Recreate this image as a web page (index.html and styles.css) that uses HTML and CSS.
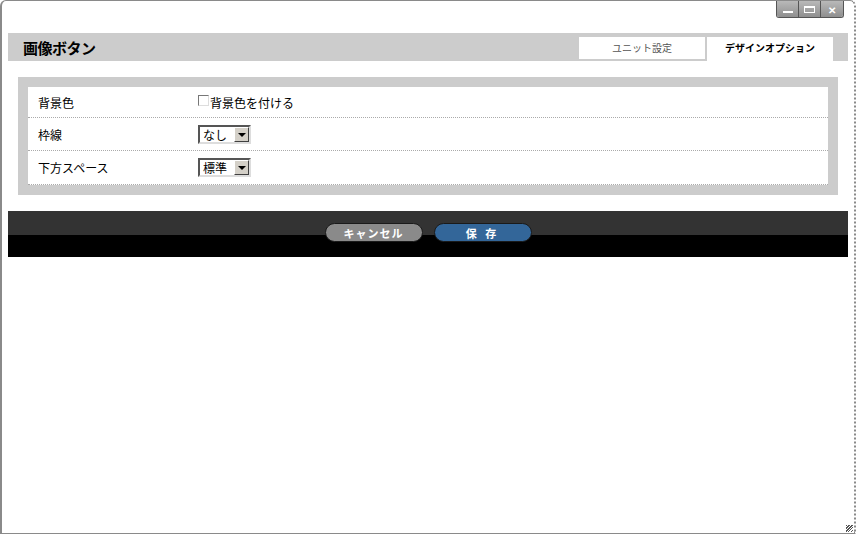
FILE: index.html
```html
<!DOCTYPE html>
<html lang="ja">
<head>
	<meta charset="UTF-8">
	<title>画像ボタン</title>
	<link rel="stylesheet" href="styles.css">
</head>
<body>
	<div class="window">
		<div class="titlebar">
			<div class="controls">
				<span class="ctl"><i class="min"></i></span>
				<span class="ctl"><i class="max"></i></span>
				<span class="ctl close">&#x2715;</span>
			</div>
		</div>
		<div class="header">
			<h1>画像ボタン</h1>
			<div class="tabs">
				<div class="tab">ユニット設定</div>
				<div class="tab active">デザインオプション</div>
			</div>
		</div>
		<div class="panel">
			<div class="rows">
				<div class="row">
					<div class="label">背景色</div>
					<div class="field"><span class="check"></span>背景色を付ける</div>
				</div>
				<div class="row">
					<div class="label">枠線</div>
					<div class="field">
						<span class="select"><span class="val">なし</span><span class="arrow"></span></span>
					</div>
				</div>
				<div class="row">
					<div class="label">下方スペース</div>
					<div class="field">
						<span class="select"><span class="val">標準</span><span class="arrow"></span></span>
					</div>
				</div>
			</div>
		</div>
		<div class="footer">
			<div class="bar"></div>
			<div class="buttons">
				<button class="btn cancel">キャンセル</button>
				<button class="btn save">保 存</button>
			</div>
		</div>
		<div class="grip"></div>
	</div>
</body>
</html>
```

FILE: styles.css
```css
*{
	margin: 0;
	padding: 0;
	box-sizing: border-box;
	font-family: "Noto Sans CJK JP", "Liberation Sans", sans-serif;
	color: #000;
}
body{
	background: #fff;
	overflow: hidden;
}
.window{
	position: relative;
	width: 856px;
	height: 534px;
	border: 1px solid #8a8a8a;
	border-left-width: 2px;
	border-right: 2px dotted #8a8a8a;
	border-radius: 6px 6px 0 0;
	background: #fff;
}
.titlebar{
	height: 32px;
	display: flex;
	justify-content: flex-end;
	padding-right: 10px;
}
.controls{
	display: flex;
	height: 17px;
	border: 1px solid #555;
	border-top: none;
	border-radius: 0 0 3px 3px;
	overflow: hidden;
}
.ctl{
	width: 22px;
	height: 16px;
	background: linear-gradient(#b9b9b9, #8f8f8f);
	border-right: 1px solid #555;
	display: flex;
	align-items: center;
	justify-content: center;
	font-size: 10px;
	font-weight: bold;
	color: #fff;
}
.ctl:last-child{
	border-right: none;
}
.ctl .min{
	width: 10px;
	height: 2px;
	background: #fff;
	margin-top: 5px;
}
.ctl .max{
	width: 11px;
	height: 7px;
	border: 1px solid #fff;
	border-top-width: 2px;
}
.header{
	margin: 0 6px 0 6px;
	height: 28px;
	background: #ccc;
	display: flex;
	justify-content: space-between;
	align-items: flex-end;
}
.header h1{
	font-size: 15px;
	font-weight: bold;
	align-self: center;
	padding-left: 15px;
	letter-spacing: -0.5px;
}
.tabs{
	display: flex;
	gap: 2px;
	margin-right: 15px;
}
.tab{
	width: 126px;
	height: 22px;
	margin-bottom: 2px;
	background: #fff;
	font-size: 10px;
	color: #555;
	text-align: center;
	line-height: 22px;
}
.tab.active{
	height: 24px;
	margin-bottom: 0;
	color: #000;
	font-weight: bold;
}
.panel{
	margin: 16px 16px 0 16px;
	padding: 10px;
	background: #ccc;
}
.rows{
	background: #fff;
}
.row{
	display: flex;
	align-items: center;
	height: 33px;
	border-bottom: 1px dotted #aaa;
	font-size: 12px;
}
.row:first-child{
	height: 31px;
}
.row:last-child{
	height: 34px;
}
.label{
	width: 170px;
	padding-left: 10px;
}
.field{
	display: flex;
	align-items: center;
	font-size: 12px;
}
.check{
	width: 11px;
	height: 11px;
	border: 1px solid #777;
	border-right-color: #ddd;
	border-bottom-color: #ddd;
	margin-right: 1px;
	margin-top: -3px;
}
.select{
	display: flex;
	align-items: center;
	height: 19px;
	border: 2px solid #555;
	border-right-color: #ddd;
	border-bottom-color: #ddd;
	background: #fff;
}
.select .val{
	padding: 0 7px 0 3px;
	font-size: 12px;
	line-height: 15px;
}
.select .arrow{
	width: 15px;
	height: 15px;
	background: #d4d0c8;
	border: 1px solid #fff;
	border-right-color: #404040;
	border-bottom-color: #404040;
	position: relative;
}
.select .arrow::after{
	content: "";
	position: absolute;
	left: 3px;
	top: 5px;
	border: 4px solid transparent;
	border-top: 4px solid #000;
	border-bottom: none;
}
.footer{
	margin: 16px 6px 0 6px;
	height: 46px;
	background: #000;
	position: relative;
}
.footer .bar{
	height: 24px;
	background: #333;
}
.buttons{
	position: absolute;
	top: 12px;
	left: 0;
	right: 0;
	display: flex;
	justify-content: center;
	gap: 11px;
}
.btn{
	width: 98px;
	height: 19px;
	border-radius: 10px;
	border: 1px solid #1a1a1a;
	font-size: 11px;
	font-weight: bold;
	color: #fff;
	letter-spacing: 1px;
	line-height: 16px;
}
.btn.cancel{
	background: #8a8a8a;
}
.btn.save{
	background: #336699;
	letter-spacing: 3px;
}
.grip{
	position: absolute;
	right: 1px;
	bottom: 1px;
	width: 7px;
	height: 7px;
	background: repeating-linear-gradient(135deg, #555 0 1px, #fff 1px 2px);
}
```
